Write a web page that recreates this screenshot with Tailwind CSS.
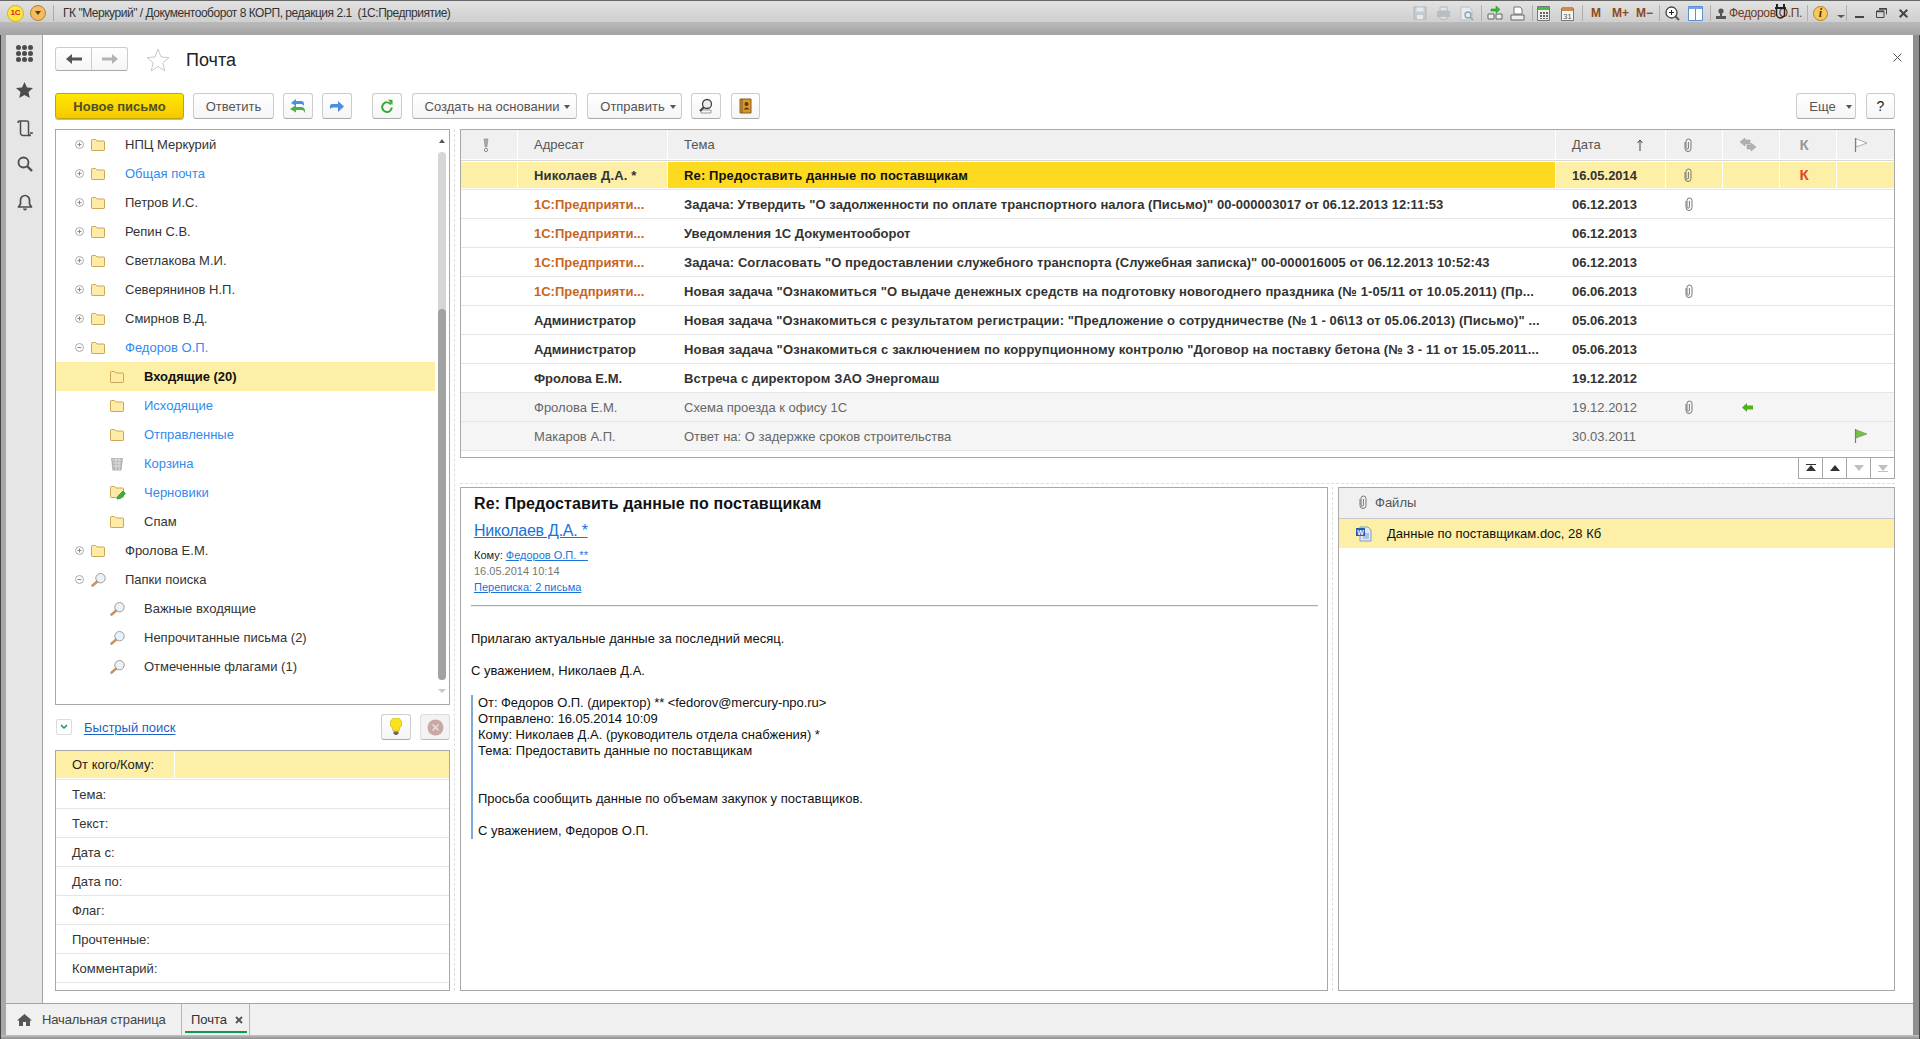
<!DOCTYPE html>
<html lang="ru">
<head>
<meta charset="utf-8">
<title>Почта</title>
<script src="https://cdn.jsdelivr.net/npm/@tailwindcss/browser@4"></script>
</head>
<body class="m-0 overflow-hidden">
<svg class="hidden" width="0" height="0">
  <defs>
    <symbol id="folder" viewBox="0 0 14 12"><path d="M.5 10.800V1.300Q.5.500 1.300.500h3.200L6 2h6.700q.8 0 .8.800v8q0 .7-.7.700H1.200q-.7 0-.7-.7z" fill="#fdeba6" stroke="#c9a658"/></symbol>
    <symbol id="plus" viewBox="0 0 9 9"><circle cx="4.500" cy="4.500" r="4" fill="none" stroke="#aaa"/><path d="M2.500 4.500h4M4.500 2.500v4" stroke="#888"/></symbol>
    <symbol id="minus" viewBox="0 0 9 9"><circle cx="4.500" cy="4.500" r="4" fill="none" stroke="#aaa"/><path d="M2.500 4.500h4" stroke="#888"/></symbol>
    <symbol id="lens" viewBox="0 0 15 14"><circle cx="9.500" cy="5.200" r="4.700" fill="#e8f2fa" stroke="#a59a8f"/><path d="M6 8.800 1.600 12.600" stroke="#c59468" stroke-width="2.600" stroke-linecap="round"/></symbol>
    <symbol id="clip" viewBox="0 0 8 14"><path d="M1 4v6.500a3 3 0 0 0 6 0V3.500a2.500 2.500 0 0 0-5 0V10a1.200 1.200 0 0 0 2.400 0V4" fill="none" stroke="#777" stroke-width="1"/></symbol>
    <symbol id="flag" viewBox="0 0 14 14"><path d="M1.500 0v14" stroke="#8a7468" stroke-width="1.200"/><path d="M2 .8 13 5 2 9z" fill="currentColor" stroke="#9a8a80" stroke-width=".7"/></symbol>
  </defs>
</svg>
<div class="flex h-[1039px] w-[1920px] flex-col overflow-hidden bg-[#a8a8a8] font-['Liberation_Sans',sans-serif] text-[13px] leading-none text-[#333]">

  <!-- window title -->
  <header class="flex h-[22px] shrink-0 items-center border-t border-[#666] bg-gradient-to-b from-[#e2e2e2] to-[#cfcfcf] pl-[7px] pr-[12px] pt-[3px]">
    <div class="flex h-[17px] w-[17px] items-center justify-center rounded-full border border-[#d8b400] bg-[#ffe640] text-[8px] font-bold text-[#d42a1a]">1С</div>
    <div class="ml-[6px] flex h-[16px] w-[16px] items-center justify-center rounded-full border border-[#b78228] bg-[#f4bc62]"><div class="h-0 w-0 border-x-[3px] border-t-[4px] border-x-transparent border-t-[#5a3a10]"></div></div>
    <div class="ml-[7px] h-[16px] w-px bg-[#aaa]"></div>
    <div class="ml-[9px] whitespace-pre text-[12px] tracking-[-0.48px] text-[#333]">ГК "Меркурий" / Документооборот 8 КОРП, редакция 2.1  (1С:Предприятие)</div>
    <div class="ml-auto flex items-center">
      <svg width="14" height="14" viewBox="0 0 14 14"><path d="M1 1h12v12H1z" fill="#c3ccd2" stroke="#aeb6bc"/><path d="M3.500 1.500h7v4h-7zM4 9h6v4H4z" fill="#e6eaec"/></svg>
      <svg class="ml-[9px]" width="15" height="14" viewBox="0 0 15 14"><path d="M4 1h7v4H4zM4 9h7v4H4z" fill="#e4e7e9" stroke="#b2b7ba"/><path d="M1 5h13v6H1z" fill="#b7bdc1"/></svg>
      <svg class="ml-[9px]" width="14" height="15" viewBox="0 0 14 15"><path d="M1 1h8l3 3v10H1z" fill="#e8ecee" stroke="#b6c0c6"/><circle cx="8" cy="9" r="3" fill="none" stroke="#8fa3ae" stroke-width="1.400"/><path d="m10 11 3 3" stroke="#8fa3ae" stroke-width="1.600"/></svg>
      <div class="ml-[7px] h-[16px] w-px bg-[#b0b0b0]"></div>
      <svg class="ml-[5px]" width="16" height="15" viewBox="0 0 16 15"><path d="M4 3h5V0l4 3.500-4 3.500V5H4z" fill="#38b838" stroke="#1e8a1e" stroke-width=".5"/><path d="M1 8h6v5H1zM9 8h6v5H9z" fill="#eee" stroke="#666"/></svg>
      <svg class="ml-[7px]" width="15" height="15" viewBox="0 0 15 15"><path d="M4 1h6l2 2v5H4z" fill="#fff" stroke="#777"/><path d="M1 9h13v5H1z" fill="#eee" stroke="#666"/></svg>
      <div class="ml-[7px] h-[16px] w-px bg-[#b0b0b0]"></div>
      <svg class="ml-[4px]" width="13" height="15" viewBox="0 0 13 15"><path d="M.5.500h12v14H.5z" fill="#eee" stroke="#777"/><path d="M1 1h11v3H1z" fill="#52b848"/><path d="M3 6h2v2H3zM6 6h2v2H6zM9 6h2v2H9zM3 9h2v2H3zM6 9h2v2H6zM9 9h2v2H9zM3 12h2v1H3zM6 12h2v1H6zM9 12h2v1H9z" fill="#666"/></svg>
      <svg class="ml-[11px]" width="13" height="15" viewBox="0 0 13 15"><path d="M.5 2.500h12v12H.5z" fill="#f4f4f4" stroke="#777"/><path d="M1 1h11v4H1z" fill="#c98a4a"/><text x="6.500" y="12.500" text-anchor="middle" font-size="7.500" fill="#555" font-family="Liberation Sans">31</text></svg>
      <div class="ml-[8px] h-[16px] w-px bg-[#b0b0b0]"></div>
      <span class="ml-[8px] text-[12px] font-bold text-[#8b4a1d]">М</span>
      <span class="ml-[11px] text-[12px] font-bold text-[#8b4a1d]">М+</span>
      <span class="ml-[7px] text-[12px] font-bold text-[#8b4a1d]">М−</span>
      <div class="ml-[6px] h-[16px] w-px bg-[#b0b0b0]"></div>
      <svg class="ml-[5px]" width="15" height="15" viewBox="0 0 15 15"><circle cx="6.500" cy="6.500" r="5.500" fill="#fff" stroke="#444" stroke-width="1.300"/><path d="M4 6.500h5M6.500 4v5" stroke="#222"/><path d="m10.500 10.500 3.500 3.500" stroke="#555" stroke-width="2"/></svg>
      <svg class="ml-[8px]" width="15" height="15" viewBox="0 0 15 15"><path d="M.5.500h14v14H.5z" fill="#fff" stroke="#5a93cf"/><path d="M1 1h13v2H1z" fill="#6fa8e0"/><path d="M7.500 3v11" stroke="#5a93cf"/></svg>
      <div class="ml-[7px] h-[16px] w-px bg-[#b0b0b0]"></div>
      <svg class="ml-[5px]" width="10" height="11" viewBox="0 0 10 11"><circle cx="5" cy="3" r="2.600" fill="#555"/><path d="M4 5h2v3h4v3H0V8h4z" fill="#555"/></svg>
      <div class="relative ml-[3px] whitespace-pre text-[12px] tracking-[-0.33px] text-[#6d3a17]">Федоров О.П.<svg class="absolute left-[45px] top-[-3px]" width="13" height="16" viewBox="0 0 13 16"><path d="M3 0v4M10 0v4" stroke="#222" stroke-width="2"/><path d="M1 4h11" stroke="#222" stroke-width="2"/><path d="M2.500 5v5a4 4 0 0 0 8 0V5" fill="none" stroke="#222" stroke-width="1.500"/></svg></div>
      <div class="ml-[5px] h-[16px] w-px bg-[#b0b0b0]"></div>
      <div class="ml-[5px] flex h-[15px] w-[15px] items-center justify-center rounded-full border border-[#b98420] bg-[#f6c95a] font-['Liberation_Serif',serif] text-[12px] font-bold italic text-[#4b3208]">i</div>
      <div class="ml-[9px] mt-[7px] h-0 w-0 border-x-[4px] border-t-[3px] border-x-transparent border-t-[#555]"></div>
      <div class="ml-[1px] h-[16px] w-px bg-[#b0b0b0]"></div>
      <div class="ml-[8px] mt-[8px] h-[2px] w-[9px] bg-[#444]"></div>
      <svg class="ml-[12px]" width="11" height="10" viewBox="0 0 11 10"><path d="M3 .5h7.500v6M.5 3h7.500v6.500H.5z" fill="none" stroke="#444"/><path d="M3 1h8M1 3.500h7" stroke="#444" stroke-width="1.500"/></svg>
      <svg class="ml-[12px]" width="9" height="9" viewBox="0 0 9 9"><path d="m.7.700 7.600 7.600M8.300.7.700 8.300" stroke="#444" stroke-width="2"/></svg>
    </div>
  </header>
  <div class="h-[13px] shrink-0 bg-gradient-to-b from-[#bababa] to-[#a3a3a3]"></div>

  <!-- body -->
  <div class="flex h-[968px] shrink-0">
    <div class="w-[6px] shrink-0 border-l border-[#444] bg-[#a8a8a8]"></div>
    <nav class="flex w-[37px] shrink-0 flex-col items-center border-r border-[#a3a3a3] bg-[#e6e6e6] pl-[1px]">
      <div class="mt-[10px] grid grid-cols-3 gap-[1px]">
        <i class="h-[5px] w-[5px] rounded-full bg-[#4d4d4d]"></i><i class="h-[5px] w-[5px] rounded-full bg-[#4d4d4d]"></i><i class="h-[5px] w-[5px] rounded-full bg-[#4d4d4d]"></i>
        <i class="h-[5px] w-[5px] rounded-full bg-[#4d4d4d]"></i><i class="h-[5px] w-[5px] rounded-full bg-[#4d4d4d]"></i><i class="h-[5px] w-[5px] rounded-full bg-[#4d4d4d]"></i>
        <i class="h-[5px] w-[5px] rounded-full bg-[#4d4d4d]"></i><i class="h-[5px] w-[5px] rounded-full bg-[#4d4d4d]"></i><i class="h-[5px] w-[5px] rounded-full bg-[#4d4d4d]"></i>
      </div>
      <svg class="mt-[20px]" width="17" height="16" viewBox="0 0 17 16"><path d="m8.500 0 2.500 5.500 6 .6-4.500 4 1.300 5.900-5.300-3-5.300 3 1.300-5.900L0 6.100l6-.6z" fill="#4d4d4d"/></svg>
      <svg class="mt-[22px]" width="16" height="17" viewBox="0 0 16 17"><path d="M1 3V2.500A1.500 1.500 0 0 1 2.500 1H10a1.500 1.500 0 0 1 1.500 1.500V13a2.500 2.500 0 0 0 2.500 2.500H6A2.500 2.500 0 0 1 3.500 13V1.500M13 13h2v1" fill="none" stroke="#4d4d4d" stroke-width="1.500"/></svg>
      <svg class="mt-[19px]" width="16" height="16" viewBox="0 0 16 16"><circle cx="6.500" cy="6.500" r="5" fill="none" stroke="#4d4d4d" stroke-width="1.800"/><path d="m10.500 10.500 4.500 4.500" stroke="#4d4d4d" stroke-width="2.400"/></svg>
      <svg class="mt-[22px]" width="16" height="17" viewBox="0 0 16 17"><path d="M8 1.500a4.500 4.500 0 0 0-4.500 4.500v4L1.500 13h13l-2-3V6A4.500 4.500 0 0 0 8 1.500z" fill="none" stroke="#4d4d4d" stroke-width="1.700" stroke-linejoin="round"/><path d="M6 14.500a2 2 0 0 0 4 0z" fill="#4d4d4d"/></svg>
    </nav>

    <main class="relative flex min-w-0 flex-1 flex-col bg-white pl-[12px] pr-[18px] pt-[12px]">
      <!-- page head -->
      <div class="flex h-[24px] items-center">
        <div class="flex h-[24px] w-[73px] rounded-[3px] border border-[#ccc] border-b-[#aaa] bg-gradient-to-b from-white to-[#f5f5f5]">
          <div class="flex flex-1 items-center justify-center border-r border-[#ccc]"><svg width="16" height="10" viewBox="0 0 16 10"><path d="M0 5 6 0v3.500h10v3H6V10z" fill="#555"/></svg></div>
          <div class="flex flex-1 items-center justify-center"><svg width="16" height="10" viewBox="0 0 16 10"><path d="M16 5 10 0v3.500H0v3h10V10z" fill="#b3b3b3"/></svg></div>
        </div>
        <svg class="ml-[18px] mt-[1px]" width="24" height="24" viewBox="0 0 24 24"><path d="m12 1 3 8 8 .6-6.200 5.200 2 8.200L12 18.500 5.200 23l2-8.200L1 9.600 9 9z" fill="#fff" stroke="#c9c9c9"/></svg>
        <h1 class="ml-[16px] pt-[2px] text-[18px] font-normal text-[#222]">Почта</h1>
      </div>
      <svg class="absolute right-[11px] top-[18px]" width="9" height="9" viewBox="0 0 9 9"><path d="m.5.500 8 8M8.500.500l-8 8" stroke="#555"/></svg>

      <!-- toolbar -->
      <div class="mt-[22px] flex h-[26px] items-center text-[#555]">
        <button class="h-[26px] w-[129px] rounded-[3px] border border-[#c5a500] bg-gradient-to-b from-[#ffe800] to-[#f6c800] text-[13px] font-bold text-[#50501f] shadow-[0_1px_0_#bbb]">Новое письмо</button>
        <button class="ml-[9px] h-[26px] w-[81px] rounded-[3px] border border-[#ccc] border-b-[#aaa] bg-gradient-to-b from-white to-[#f5f5f5]">Ответить</button>
        <button class="ml-[9px] flex h-[26px] w-[30px] items-center justify-center rounded-[3px] border border-[#ccc] border-b-[#aaa] bg-gradient-to-b from-white to-[#f5f5f5]"><svg width="16" height="16" viewBox="0 0 16 16"><path d="M1 5 6 1v2h5q3 0 3 3v2q-1-2-3-2H6v2z" fill="#4c8fe0"/><path d="M0 11 6 7v2h6q2 0 3 3v3q-1-3-3-3H6v2.500z" fill="#4fb04a"/></svg></button>
        <button class="ml-[9px] flex h-[26px] w-[30px] items-center justify-center rounded-[3px] border border-[#ccc] border-b-[#aaa] bg-gradient-to-b from-white to-[#f5f5f5]"><svg width="14" height="11" viewBox="0 0 14 11"><path d="M14 5.500 8 0v3H2Q0 3 0 5v3q1-1.500 3-1.500h5V11z" fill="#4c8fe0"/></svg></button>
        <button class="ml-[20px] flex h-[26px] w-[30px] items-center justify-center rounded-[3px] border border-[#ccc] border-b-[#aaa] bg-gradient-to-b from-white to-[#f5f5f5]"><svg width="12" height="14" viewBox="0 0 12 14"><path d="M10 5.500A4.800 4.800 0 1 0 10.800 8.500" fill="none" stroke="#33a833" stroke-width="2"/><path d="M7 .500 11.500 1v5z" fill="#33a833"/></svg></button>
        <button class="ml-[10px] flex h-[26px] w-[165px] items-center justify-center gap-[5px] rounded-[3px] border border-[#ccc] border-b-[#aaa] bg-gradient-to-b from-white to-[#f5f5f5] pl-[6px]">Создать на основании<i class="mt-[2px] h-0 w-0 border-x-[3px] border-t-[4px] border-x-transparent border-t-[#555]"></i></button>
        <button class="ml-[10px] flex h-[26px] w-[95px] items-center justify-center gap-[5px] rounded-[3px] border border-[#ccc] border-b-[#aaa] bg-gradient-to-b from-white to-[#f5f5f5] pl-[7px]">Отправить<i class="mt-[2px] h-0 w-0 border-x-[3px] border-t-[4px] border-x-transparent border-t-[#555]"></i></button>
        <button class="ml-[9px] flex h-[26px] w-[30px] items-center justify-center rounded-[3px] border border-[#ccc] border-b-[#aaa] bg-gradient-to-b from-white to-[#f5f5f5]"><svg width="16" height="16" viewBox="0 0 16 16"><path d="M3 12h10v3H3z" fill="none" stroke="#999"/><circle cx="9" cy="6" r="4.500" fill="#e8eef2" stroke="#444" stroke-width="1.300"/><path d="M6 9 2 13" stroke="#444" stroke-width="2"/></svg></button>
        <button class="ml-[10px] flex h-[26px] w-[29px] items-center justify-center rounded-[3px] border border-[#ccc] border-b-[#aaa] bg-gradient-to-b from-white to-[#f5f5f5]"><svg width="13" height="16" viewBox="0 0 13 16"><path d="M1 1h11v14H1z" fill="#d9982e" stroke="#8a5a1a"/><path d="M3 1v14" stroke="#8a5a1a"/><circle cx="7.500" cy="6" r="2" fill="#5a3a12"/><path d="M4.500 11.500q3-4 6 0z" fill="#5a3a12"/></svg></button>
        <button class="ml-auto flex h-[26px] w-[60px] items-center justify-center gap-[10px] rounded-[3px] border border-[#ccc] border-b-[#aaa] bg-gradient-to-b from-white to-[#f5f5f5] pl-[9px]">Еще<i class="mt-[2px] h-0 w-0 border-x-[3px] border-t-[4px] border-x-transparent border-t-[#555]"></i></button>
        <button class="ml-[10px] h-[26px] w-[29px] rounded-[3px] border border-[#ccc] border-b-[#aaa] bg-gradient-to-b from-white to-[#f5f5f5] text-[14px] text-[#222]">?</button>
      </div>

      <!-- workspace -->
      <div class="mt-[10px] flex h-[862px]">
        <!-- left column -->
        <section class="flex w-[395px] shrink-0 flex-col">
          <div class="flex h-[576px] border border-[#a8a8a8]">
            <ul class="w-[379px] shrink-0">
              <li class="flex h-[29px] items-center pl-[19px]"><svg width="9" height="9" class="mr-[7px]"><use href="#plus"/></svg><svg width="14" height="12" class="mr-[20px]"><use href="#folder"/></svg>НПЦ Меркурий</li>
              <li class="flex h-[29px] items-center pl-[19px] text-[#2f8bf0]"><svg width="9" height="9" class="mr-[7px]"><use href="#plus"/></svg><svg width="14" height="12" class="mr-[20px]"><use href="#folder"/></svg>Общая почта</li>
              <li class="flex h-[29px] items-center pl-[19px]"><svg width="9" height="9" class="mr-[7px]"><use href="#plus"/></svg><svg width="14" height="12" class="mr-[20px]"><use href="#folder"/></svg>Петров И.С.</li>
              <li class="flex h-[29px] items-center pl-[19px]"><svg width="9" height="9" class="mr-[7px]"><use href="#plus"/></svg><svg width="14" height="12" class="mr-[20px]"><use href="#folder"/></svg>Репин С.В.</li>
              <li class="flex h-[29px] items-center pl-[19px]"><svg width="9" height="9" class="mr-[7px]"><use href="#plus"/></svg><svg width="14" height="12" class="mr-[20px]"><use href="#folder"/></svg>Светлакова М.И.</li>
              <li class="flex h-[29px] items-center pl-[19px]"><svg width="9" height="9" class="mr-[7px]"><use href="#plus"/></svg><svg width="14" height="12" class="mr-[20px]"><use href="#folder"/></svg>Северянинов Н.П.</li>
              <li class="flex h-[29px] items-center pl-[19px]"><svg width="9" height="9" class="mr-[7px]"><use href="#plus"/></svg><svg width="14" height="12" class="mr-[20px]"><use href="#folder"/></svg>Смирнов В.Д.</li>
              <li class="flex h-[29px] items-center pl-[19px] text-[#2f8bf0]"><svg width="9" height="9" class="mr-[7px]"><use href="#minus"/></svg><svg width="14" height="12" class="mr-[20px]"><use href="#folder"/></svg>Федоров О.П.</li>
              <li class="flex h-[29px] items-center bg-[#fdf0a6] pl-[54px] font-bold text-[#111]"><svg width="14" height="12" class="mr-[20px]"><use href="#folder"/></svg>Входящие (20)</li>
              <li class="flex h-[29px] items-center pl-[54px] text-[#2f8bf0]"><svg width="14" height="12" class="mr-[20px]"><use href="#folder"/></svg>Исходящие</li>
              <li class="flex h-[29px] items-center pl-[54px] text-[#2f8bf0]"><svg width="14" height="12" class="mr-[20px]"><use href="#folder"/></svg>Отправленные</li>
              <li class="flex h-[29px] items-center pl-[54px] text-[#2f8bf0]"><svg width="14" height="14" viewBox="0 0 14 14" class="mr-[20px]"><path d="M1 1h12l-1.500 12.500h-9z" fill="#b4b4b4"/><path d="M2 3h10M3 6h8M3 9h8M6 1v12M9 1v12" stroke="#e8e8e8" stroke-width=".8"/></svg>Корзина</li>
              <li class="flex h-[29px] items-center pl-[54px] text-[#2f8bf0]"><svg width="16" height="14" viewBox="0 0 16 14" class="mr-[18px]"><path d="M.5 10.800V1.300Q.5.500 1.300.500h3.200L6 2h6.700q.8 0 .8.800v8q0 .7-.7.700H1.200q-.7 0-.7-.7z" fill="#fdeba6" stroke="#c9a658"/><path d="m7 13 1-3 5-5 2.500 2.500-5 5z" fill="#3bb03b" stroke="#1b7a1b" stroke-width=".6"/></svg>Черновики</li>
              <li class="flex h-[29px] items-center pl-[54px]"><svg width="14" height="12" class="mr-[20px]"><use href="#folder"/></svg>Спам</li>
              <li class="flex h-[29px] items-center pl-[19px]"><svg width="9" height="9" class="mr-[7px]"><use href="#plus"/></svg><svg width="14" height="12" class="mr-[20px]"><use href="#folder"/></svg>Фролова Е.М.</li>
              <li class="flex h-[29px] items-center pl-[19px]"><svg width="9" height="9" class="mr-[7px]"><use href="#minus"/></svg><svg width="15" height="14" class="mr-[19px]"><use href="#lens"/></svg>Папки поиска</li>
              <li class="flex h-[29px] items-center pl-[54px]"><svg width="15" height="14" class="mr-[19px]"><use href="#lens"/></svg>Важные входящие</li>
              <li class="flex h-[29px] items-center pl-[54px]"><svg width="15" height="14" class="mr-[19px]"><use href="#lens"/></svg>Непрочитанные письма (2)</li>
              <li class="flex h-[29px] items-center pl-[54px]"><svg width="15" height="14" class="mr-[19px]"><use href="#lens"/></svg>Отмеченные флагами (1)</li>
            </ul>
            <div class="flex flex-1 flex-col items-center pl-[1px] pr-[2px]">
              <i class="mt-[9px] h-0 w-0 border-x-[3px] border-b-[4px] border-x-transparent border-b-[#555]"></i>
              <div class="mt-[9px] flex h-[528px] w-[8px] flex-col justify-end rounded-[4px] bg-[#d6d6d6]"><div class="h-[371px] rounded-[4px] bg-[#a2a2a2]"></div></div>
              <i class="mt-[9px] h-0 w-0 border-x-[4px] border-t-[4px] border-x-transparent border-t-[#c8c8c8]"></i>
            </div>
          </div>
          <div class="mt-[9px] flex h-[26px] items-center">
            <div class="ml-[1px] flex h-[16px] w-[16px] items-center justify-center rounded-[2px] border border-[#ddd]"><svg width="8" height="6" viewBox="0 0 8 6"><path d="m1 1 3 3 3-3" fill="none" stroke="#0f9a4b" stroke-width="1.500"/></svg></div>
            <a class="ml-[12px] text-[#1b62c4] underline decoration-1 underline-offset-2">Быстрый поиск</a>
            <button class="ml-auto flex h-[26px] w-[30px] items-center justify-center rounded-[3px] border border-[#ccc] border-b-[#aaa] bg-gradient-to-b from-white to-[#f5f5f5]"><svg width="12" height="18" viewBox="0 0 12 18"><path d="M6 0a5.500 5.500 0 0 1 3.500 10L9 13H3l-.5-3A5.500 5.500 0 0 1 6 0z" fill="#fbe21f" stroke="#c6a90b" stroke-width=".6"/><path d="M3.500 13.500h5v2l-1.500 1.500h-2l-1.500-1.500z" fill="#666"/></svg></button>
            <button class="ml-[9px] flex h-[26px] w-[30px] items-center justify-center rounded-[3px] border border-[#ddd] border-b-[#bbb] bg-[#f3f3f3]"><svg width="17" height="17" viewBox="0 0 17 17"><circle cx="8.500" cy="8.500" r="8" fill="#c9a8a6"/><path d="m5.500 5.500 6 6M11.500 5.500l-6 6" stroke="#e8dcdc" stroke-width="1.600"/></svg></button>
          </div>
          <div class="mt-[10px] h-[241px] border border-[#a8a8a8]">
            <div class="flex h-[29px] border-b border-[#e5e5e5]"><div class="mb-[1px] flex w-[119px] items-center border-r border-white bg-[#fdf0a6] pl-[16px] text-[#222]">От кого/Кому:</div><div class="mb-[1px] flex-1 bg-[#fdf0a6]"></div></div>
            <div class="flex h-[29px] items-center border-b border-[#e5e5e5] pl-[16px]">Тема:</div>
            <div class="flex h-[29px] items-center border-b border-[#e5e5e5] pl-[16px]">Текст:</div>
            <div class="flex h-[29px] items-center border-b border-[#e5e5e5] pl-[16px]">Дата с:</div>
            <div class="flex h-[29px] items-center border-b border-[#e5e5e5] pl-[16px]">Дата по:</div>
            <div class="flex h-[29px] items-center border-b border-[#e5e5e5] pl-[16px]">Флаг:</div>
            <div class="flex h-[29px] items-center border-b border-[#e5e5e5] pl-[16px]">Прочтенные:</div>
            <div class="flex h-[29px] items-center border-b border-[#e5e5e5] pl-[16px]">Комментарий:</div>
          </div>
        </section>

        <div class="mx-[4px] w-[2px] shrink-0 border-l border-dashed border-[#ddd]"></div>

        <!-- right column -->
        <section class="flex min-w-0 flex-1 flex-col">
          <div class="h-[329px] border border-[#a8a8a8]">
            <div class="grid h-[31px] grid-cols-[57px_150px_888px_110px_57px_57px_57px_57px] border-b border-[#d8d8d8] pb-[1px] text-[#555]">
              <div class="flex items-center justify-center border-r border-white bg-[#f0f0f0] pr-[7px]"><svg width="6" height="14" viewBox="0 0 6 14"><path d="M1 1h4L3.800 9H2.200z" fill="#aaa" stroke="#888" stroke-width=".6"/><circle cx="3" cy="12" r="1.600" fill="#fff" stroke="#888"/></svg></div>
              <div class="flex items-center border-r border-white bg-[#f0f0f0] pl-[16px]">Адресат</div>
              <div class="flex items-center border-r border-white bg-[#f0f0f0] pl-[16px]">Тема</div>
              <div class="flex items-center justify-between border-r border-white bg-[#f0f0f0] pl-[16px] pr-[22px]">Дата<svg width="6" height="12" viewBox="0 0 6 12"><path d="M3 1v11M.5 4 3 1l2.500 3" fill="none" stroke="#444"/></svg></div>
              <div class="flex items-center justify-center border-r border-white bg-[#f0f0f0] pr-[12px]"><svg width="8" height="14"><use href="#clip"/></svg></div>
              <div class="flex items-center justify-center border-r border-white bg-[#f0f0f0] pr-[7px]"><svg width="16" height="14" viewBox="0 0 16 14"><path d="M0 4 5 0v2h5v4H5v2zM16 9l-5-4v2H7v4h4v2z" fill="#b0b0b0" stroke="#999" stroke-width=".5"/></svg></div>
              <div class="flex items-center justify-center border-r border-white bg-[#f0f0f0] pr-[8px] text-[15px] font-bold text-[#999]">К</div>
              <div class="flex items-center justify-center bg-[#f0f0f0] pr-[9px] text-white"><svg width="14" height="14"><use href="#flag"/></svg></div>
            </div>
            <div class="grid h-[29px] grid-cols-[57px_150px_888px_110px_57px_57px_57px_57px] border-b border-[#e5e5e5] py-[1px] font-bold">
              <div class="border-r border-white bg-[#fdf0a6]"></div>
              <div class="flex items-center border-r border-white bg-[#fdf0a6] pl-[16px] tracking-[0.15px]">Николаев Д.А. *</div>
              <div class="flex items-center border-r border-white bg-[#fdda1f] pl-[16px] tracking-[0.13px] text-[#111]">Re: Предоставить данные по поставщикам</div>
              <div class="flex items-center border-r border-white bg-[#fdf0a6] pl-[16px]">16.05.2014</div>
              <div class="flex items-center justify-center border-r border-white bg-[#fdf0a6] pr-[12px]"><svg width="8" height="14"><use href="#clip"/></svg></div>
              <div class="border-r border-white bg-[#fdf0a6]"></div>
              <div class="flex items-center justify-center border-r border-white bg-[#fdf0a6] pb-[1px] pr-[8px] text-[15px] text-[#dc4a2c]">К</div>
              <div class="bg-[#fdf0a6]"></div>
            </div>
            <div class="grid h-[29px] grid-cols-[57px_150px_888px_110px_57px_57px_57px_57px] items-center border-b border-[#e5e5e5] font-bold">
              <div></div><div class="pl-[16px] text-[#c8661e]">1С:Предприяти...</div><div class="whitespace-nowrap pl-[16px] tracking-[0.04px]">Задача: Утвердить "О задолженности по оплате транспортного налога (Письмо)" 00-000003017 от 06.12.2013 12:11:53</div><div class="pl-[16px]">06.12.2013</div><div class="flex justify-center pr-[12px]"><svg width="8" height="14"><use href="#clip"/></svg></div>
            </div>
            <div class="grid h-[29px] grid-cols-[57px_150px_888px_110px_57px_57px_57px_57px] items-center border-b border-[#e5e5e5] font-bold">
              <div></div><div class="pl-[16px] text-[#c8661e]">1С:Предприяти...</div><div class="whitespace-nowrap pl-[16px]">Уведомления 1С Документооборот</div><div class="pl-[16px]">06.12.2013</div>
            </div>
            <div class="grid h-[29px] grid-cols-[57px_150px_888px_110px_57px_57px_57px_57px] items-center border-b border-[#e5e5e5] font-bold">
              <div></div><div class="pl-[16px] text-[#c8661e]">1С:Предприяти...</div><div class="whitespace-nowrap pl-[16px] tracking-[0.08px]">Задача: Согласовать "О предоставлении служебного транспорта (Служебная записка)" 00-000016005 от 06.12.2013 10:52:43</div><div class="pl-[16px]">06.12.2013</div>
            </div>
            <div class="grid h-[29px] grid-cols-[57px_150px_888px_110px_57px_57px_57px_57px] items-center border-b border-[#e5e5e5] font-bold">
              <div></div><div class="pl-[16px] text-[#c8661e]">1С:Предприяти...</div><div class="whitespace-nowrap pl-[16px] tracking-[0.14px]">Новая задача "Ознакомиться "О выдаче денежных средств на подготовку новогоднего праздника (№ 1-05/11 от 10.05.2011) (Пр...</div><div class="pl-[16px]">06.06.2013</div><div class="flex justify-center pr-[12px]"><svg width="8" height="14"><use href="#clip"/></svg></div>
            </div>
            <div class="grid h-[29px] grid-cols-[57px_150px_888px_110px_57px_57px_57px_57px] items-center border-b border-[#e5e5e5] font-bold">
              <div></div><div class="pl-[16px]">Администратор</div><div class="whitespace-nowrap pl-[16px] tracking-[0.12px]">Новая задача "Ознакомиться с результатом регистрации: "Предложение о сотрудничестве (№ 1 - 06\13 от 05.06.2013) (Письмо)" ...</div><div class="pl-[16px]">05.06.2013</div>
            </div>
            <div class="grid h-[29px] grid-cols-[57px_150px_888px_110px_57px_57px_57px_57px] items-center border-b border-[#e5e5e5] font-bold">
              <div></div><div class="pl-[16px]">Администратор</div><div class="whitespace-nowrap pl-[16px] tracking-[0.15px]">Новая задача "Ознакомиться с заключением по коррупционному контролю "Договор на поставку бетона (№ 3 - 11 от 15.05.2011...</div><div class="pl-[16px]">05.06.2013</div>
            </div>
            <div class="grid h-[29px] grid-cols-[57px_150px_888px_110px_57px_57px_57px_57px] items-center border-b border-[#e5e5e5] font-bold">
              <div></div><div class="pl-[16px]">Фролова Е.М.</div><div class="whitespace-nowrap pl-[16px] tracking-[0.1px]">Встреча с директором ЗАО Энергомаш</div><div class="pl-[16px]">19.12.2012</div>
            </div>
            <div class="grid h-[29px] grid-cols-[57px_150px_888px_110px_57px_57px_57px_57px] items-center border-b border-[#e5e5e5] bg-[#f5f5f5] text-[#666]">
              <div></div><div class="pl-[16px]">Фролова Е.М.</div><div class="pl-[16px]">Схема проезда к офису 1С</div><div class="pl-[16px]">19.12.2012</div><div class="flex justify-center pr-[12px]"><svg width="8" height="14"><use href="#clip"/></svg></div><div class="flex justify-center pr-[8px]"><svg width="11" height="9" viewBox="0 0 11 9"><path d="M0 4.500 5 0v2.500h6v4H5V9z" fill="#4cb41a"/></svg></div>
            </div>
            <div class="grid h-[29px] grid-cols-[57px_150px_888px_110px_57px_57px_57px_57px] items-center border-b border-[#e5e5e5] bg-[#f5f5f5] text-[#666]">
              <div></div><div class="pl-[16px]">Макаров А.П.</div><div class="pl-[16px]">Ответ на: О задержке сроков строительства</div><div class="pl-[16px]">30.03.2011</div><div></div><div></div><div></div><div class="flex justify-center pr-[9px] text-[#66cc33]"><svg width="14" height="14"><use href="#flag"/></svg></div>
            </div>
          </div>
          <div class="flex h-[21px] justify-end">
            <div class="flex h-[21px] border-x border-b border-[#a8a8a8]">
              <div class="flex w-[24px] items-center justify-center border-r border-[#a8a8a8]"><svg width="10" height="8" viewBox="0 0 10 8"><path d="M0 0h10v1H0zM5 1l5 6H0z" fill="#333"/></svg></div>
              <div class="flex w-[24px] items-center justify-center border-r border-[#a8a8a8]"><svg width="10" height="6" viewBox="0 0 10 6"><path d="m5 0 5 6H0z" fill="#333"/></svg></div>
              <div class="flex w-[24px] items-center justify-center border-r border-[#a8a8a8]"><svg width="10" height="6" viewBox="0 0 10 6"><path d="M5 6 10 0H0z" fill="#c0c0c0"/></svg></div>
              <div class="flex w-[23px] items-center justify-center"><svg width="10" height="8" viewBox="0 0 10 8"><path d="M0 7h10v1H0zM5 7 10 1H0z" fill="#c0c0c0"/></svg></div>
            </div>
          </div>
          <div class="mt-[4px] h-[1px] border-t border-dashed border-[#ddd]"></div>
          <div class="mt-[3px] flex h-[504px]">
            <article class="w-[868px] shrink-0 border border-[#a8a8a8] pl-[10px] pr-[9px]">
              <div class="pl-[3px]">
                <h2 class="mt-[7px] text-[16px] font-bold leading-[18px] tracking-[0.1px] text-[#111]">Re: Предоставить данные по поставщикам</h2>
                <a class="mt-[9px] block w-fit text-[16px] leading-[18px] tracking-[-0.25px] text-[#1b72d8] underline decoration-1">Николаев Д.А. *</a>
                <div class="mt-[7px] text-[11px] leading-[16px] text-[#222]">Кому: <a class="text-[#1b72d8] underline">Федоров О.П. **</a></div>
                <div class="text-[11px] leading-[16px] text-[#777]">16.05.2014 10:14</div>
                <a class="block w-fit text-[11px] leading-[16px] text-[#1b72d8] underline">Переписка: 2 письма</a>
              </div>
              <div class="mt-[10px] h-[2px] border-t border-[#aaa] bg-[#eee]"></div>
              <div class="mt-[24px] text-[13px] leading-[16px] text-[#111]">
                <p>Прилагаю актуальные данные за последний месяц.</p>
                <p class="mt-[16px]">С уважением, Николаев Д.А.</p>
                <blockquote class="mt-[16px] border-l-2 border-[#7fa8dc] pl-[5px]">
                  <p class="tracking-[-0.06px]">От: Федоров О.П. (директор) ** &lt;fedorov@mercury-npo.ru&gt;</p>
                  <p class="tracking-[-0.08px]">Отправлено: 16.05.2014 10:09</p>
                  <p>Кому: Николаев Д.А. (руководитель отдела снабжения) *</p>
                  <p>Тема: Предоставить данные по поставщикам</p>
                  <p class="mt-[32px]">Просьба сообщить данные по объемам закупок у поставщиков.</p>
                  <p class="mt-[16px]">С уважением, Федоров О.П.</p>
                </blockquote>
              </div>
            </article>
            <div class="mx-[4px] w-[2px] shrink-0 border-l border-dashed border-[#ddd]"></div>
            <aside class="min-w-0 flex-1 border border-[#a8a8a8]">
              <div class="flex h-[31px] items-center border-b border-[#c8c8c8] bg-[#f0f0f0] pb-[2px] pl-[20px] text-[#555]"><svg width="8" height="14"><use href="#clip"/></svg><span class="ml-[8px]">Файлы</span></div>
              <div class="flex h-[29px] items-center bg-[#fdf0a6] pl-[16px] text-[#111]"><svg width="17" height="16" viewBox="0 0 17 16"><path d="M5 1h8l3 3v11H5z" fill="#dfe8f5" stroke="#7f9cc8"/><path d="M8 8h6M8 10h6M8 12h6" stroke="#7f9cc8"/><path d="M1 2h9v8H1z" fill="#2c5bb0"/><text x="5.500" y="9" text-anchor="middle" font-size="7" font-weight="bold" fill="#fff" font-family="Liberation Sans">W</text></svg><span class="ml-[15px]">Данные по поставщикам.doc, 28 Кб</span></div>
            </aside>
          </div>
        </section>
      </div>
    </main>
    <div class="w-[7px] shrink-0 border-r border-[#444] bg-[#8e8e8e]"></div>
  </div>

  <!-- tabs -->
  <div class="flex h-[32px] shrink-0">
    <div class="w-[6px] shrink-0 border-l border-[#444] bg-[#a8a8a8]"></div>
    <div class="flex flex-1 border-t border-[#a3a3a3] bg-[#f0f0f0]">
      <div class="flex w-[176px] items-center border-r border-[#b5b5b5] pl-[11px] text-[#444]"><svg width="15" height="12" viewBox="0 0 15 12"><path d="M7.500 0 15 6.500h-2V12H9V8H6v4H2V6.500H0z" fill="#555"/></svg><span class="ml-[10px] tracking-[-0.12px]">Начальная страница</span></div>
      <div class="relative flex w-[68px] items-center border-r border-[#b5b5b5] pl-[9px] text-[#333]">Почта<svg class="ml-[8px]" width="8" height="8" viewBox="0 0 8 8"><path d="m1 1 6 6M7 1 1 7" stroke="#555" stroke-width="1.800"/></svg><div class="absolute bottom-[2px] left-[3px] h-[2px] w-[62px] bg-[#0f9a4b]"></div></div>
    </div>
    <div class="w-[7px] shrink-0 border-r border-[#444] bg-[#8e8e8e]"></div>
  </div>
  <div class="flex-1 border-x border-[#444] bg-gradient-to-b from-[#c4c4c4] to-[#8e8e8e]"></div>
</div>
</body>
</html>
